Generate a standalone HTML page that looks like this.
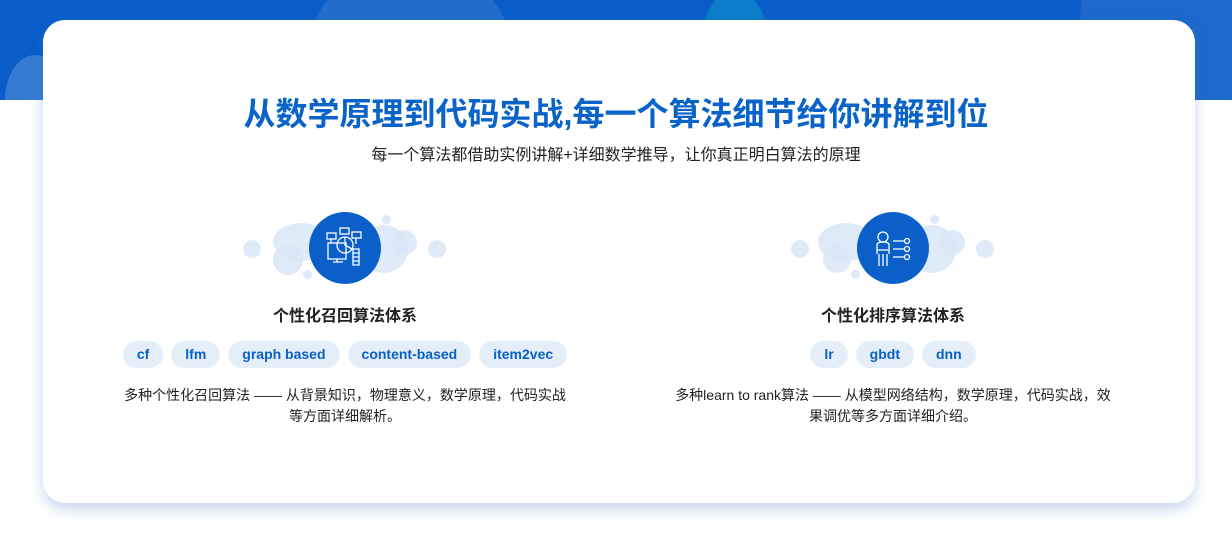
<!DOCTYPE html>
<html><head><meta charset="utf-8"><style>
*{margin:0;padding:0;box-sizing:border-box}
body{width:1232px;height:540px;background:#fff;position:relative;overflow:hidden;font-family:"Liberation Sans","Noto Sans CJK SC",sans-serif}
.band{position:absolute;left:0;top:0;width:1232px;height:100px;background:#0a5dc8;overflow:hidden}
.band i{position:absolute;border-radius:50%}
.card{position:absolute;left:43px;top:20px;width:1152px;height:483px;background:#fff;border-radius:22px;box-shadow:0 6px 14px rgba(60,120,200,.3)}
.t{position:absolute;left:0;width:1232px;text-align:center}
.title{top:89px;font-size:32px;font-weight:bold;color:#0a63c9;letter-spacing:0}
.sub{top:141px;font-size:16px;color:#222}
.col{position:absolute;top:200px;width:500px}
.b{position:absolute;border-radius:50%;background:#d8e6f6;opacity:.85}
.ic{position:absolute;left:214px;top:12px;width:72px;height:72px;border-radius:50%;background:#0a60c8}
.h{position:absolute;top:102px;width:500px;text-align:center;font-size:16px;font-weight:bold;color:#222}
.tags{position:absolute;top:141px;width:500px;text-align:center;font-size:0}
.tags span{display:inline-block;height:27px;line-height:27px;padding:0 14px;margin:0 4px;border-radius:14px;background:#e3eef9;color:#0a5fc5;font-size:14px;font-weight:bold}
.d{position:absolute;top:185px;left:-10px;width:520px;text-align:center;font-size:14px;line-height:21px;color:#222}
</style></head><body>
<div class="band">
<i style="left:305px;top:-40px;width:210px;height:210px;background:rgba(255,255,255,.1)"></i>
<i style="left:700px;top:-10px;width:70px;height:120px;background:#0a7cc8"></i>
<i style="left:5px;top:55px;width:60px;height:90px;background:rgba(255,255,255,.18)"></i>
<i style="left:1080px;top:-80px;width:200px;height:200px;background:rgba(255,255,255,.08)"></i>
</div>
<div class="card"></div>
<div class="t title">从数学原理到代码实战,每一个算法细节给你讲解到位</div>
<div class="t sub">每一个算法都借助实例讲解+详细数学推导，让你真正明白算法的原理</div>

<div class="col" style="left:95px">
<i class="b" style="left:148px;top:40px;width:18px;height:18px"></i>
<i class="b" style="left:178px;top:45px;width:30px;height:30px"></i>
<i class="b" style="left:178px;top:23px;width:56px;height:38px"></i>
<i class="b" style="left:265px;top:25px;width:48px;height:48px"></i>
<i class="b" style="left:297px;top:30px;width:25px;height:25px"></i>
<i class="b" style="left:333px;top:40px;width:18px;height:18px"></i>
<i class="b" style="left:287px;top:15px;width:9px;height:9px"></i>
<i class="b" style="left:208px;top:70px;width:9px;height:9px"></i>
<div class="ic"><svg width="72" height="72" viewBox="0 0 72 72" fill="none" stroke="#fff" stroke-width="1.3"><rect x="18" y="21" width="9" height="6"/><rect x="31" y="16" width="9" height="6"/><rect x="43" y="20" width="9" height="6"/><circle cx="36" cy="33" r="8"/><path d="M36 25v8l7 4M22 27v4M47 26v6"/><rect x="19" y="31" width="18" height="16"/><path d="M28 47v3h-4h10"/><path d="M44 37h6v16h-6zM44 41h6M44 45h6M44 49h6"/></svg></div>
<div class="h">个性化召回算法体系</div>
<div class="tags"><span>cf</span><span>lfm</span><span>graph based</span><span>content-based</span><span>item2vec</span></div>
<div class="d">多种个性化召回算法 —— 从背景知识，物理意义，数学原理，代码实战<br>等方面详细解析。</div>
</div>

<div class="col" style="left:643px">
<i class="b" style="left:148px;top:40px;width:18px;height:18px"></i>
<i class="b" style="left:180px;top:45px;width:28px;height:28px"></i>
<i class="b" style="left:175px;top:23px;width:56px;height:38px"></i>
<i class="b" style="left:265px;top:25px;width:48px;height:48px"></i>
<i class="b" style="left:297px;top:30px;width:25px;height:25px"></i>
<i class="b" style="left:333px;top:40px;width:18px;height:18px"></i>
<i class="b" style="left:287px;top:15px;width:9px;height:9px"></i>
<i class="b" style="left:208px;top:70px;width:9px;height:9px"></i>
<div class="ic"><svg width="72" height="72" viewBox="0 0 72 72" fill="none" stroke="#fff" stroke-width="1.3"><circle cx="26" cy="25" r="5"/><path d="M20 42v-9q0-3 6-3t6 3v9M22 42v12M30 42v12M26 42v12M20 38h12"/><path d="M36 29h11M36 37h11M36 45h11"/><circle cx="50" cy="29" r="2.5"/><circle cx="50" cy="37" r="2.5"/><circle cx="50" cy="45" r="2.5"/></svg></div>
<div class="h">个性化排序算法体系</div>
<div class="tags"><span>lr</span><span>gbdt</span><span>dnn</span></div>
<div class="d">多种learn to rank算法 —— 从模型网络结构，数学原理，代码实战，效<br>果调优等多方面详细介绍。</div>
</div>
</body></html>
